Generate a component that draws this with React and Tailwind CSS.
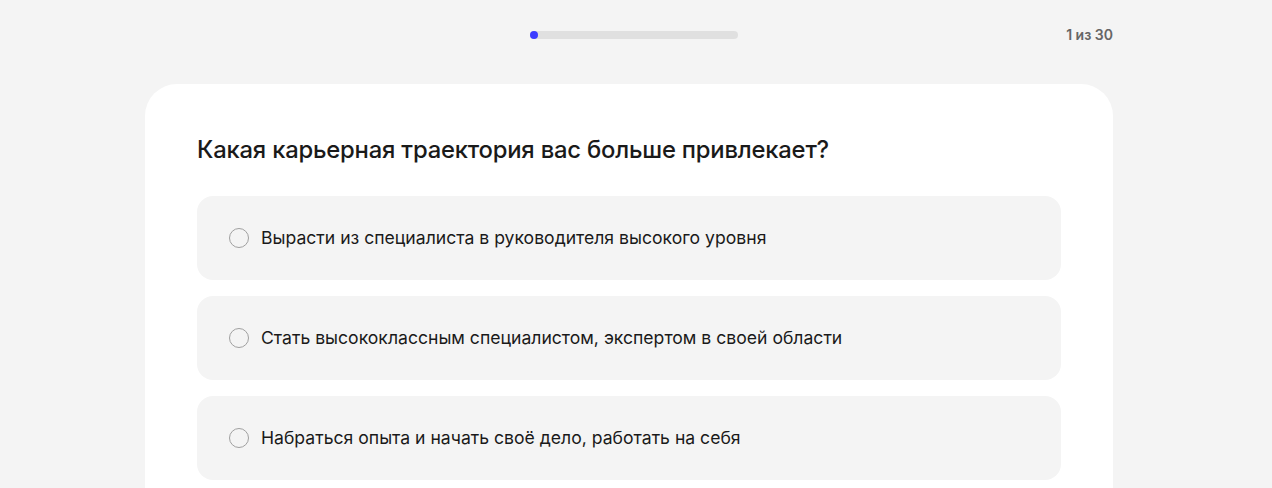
import React from "react";

const options = [
  "Вырасти из специалиста в руководителя высокого уровня",
  "Стать высококлассным специалистом, экспертом в своей области",
  "Набраться опыта и начать своё дело, работать на себя",
];

export default function App() {
  return (
    <div
      className="min-h-screen bg-[#f4f4f4] overflow-hidden"
      style={{ fontFamily: "Inter, 'Noto Sans', sans-serif" }}
    >
      <div className="w-[968px] ml-[145px]">
        <div className="flex items-center h-[70px]">
          <div className="ml-[385px] w-[208px] h-[8px] rounded-full bg-[#e0e0e0] flex">
            <div className="w-[8px] h-[8px] rounded-full bg-[#3d3dff]" />
          </div>
          <div className="ml-auto text-[14px] font-semibold text-[#666666] pb-[2px]">
            1 из 30
          </div>
        </div>
        <div className="mt-[14px] bg-white rounded-[32px] px-[52px] pt-[50px] pb-[52px]">
          <h1 className="text-[23.8px] leading-[32px] font-medium text-[#1a1a1a] tracking-[-0.2px]">
            Какая карьерная траектория вас больше привлекает?
          </h1>
          <div className="mt-[30px] flex flex-col gap-[16px]">
            {options.map((o) => (
              <div
                key={o}
                className="h-[84px] rounded-[16px] bg-[#f4f4f4] flex items-center px-[32px] gap-[12px]"
              >
                <div className="w-[20px] h-[20px] rounded-full border-[1.5px] border-[#a0a0a0] shrink-0" />
                <span className="text-[17.6px] text-[#1a1a1a] pt-[1px]">{o}</span>
              </div>
            ))}
          </div>
        </div>
      </div>
    </div>
  );
}
